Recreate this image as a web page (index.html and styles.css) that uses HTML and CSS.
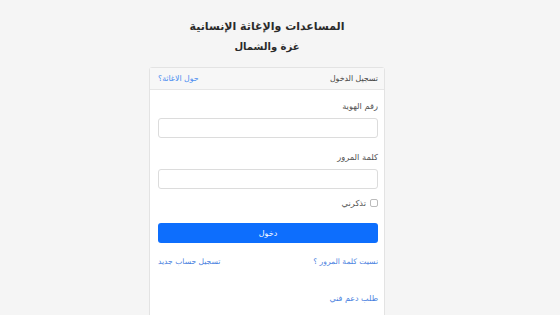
FILE: index.html
```html
<!DOCTYPE html>
<html lang="ar" dir="rtl">
<head>
<meta charset="utf-8">
<link rel="stylesheet" href="styles.css">
</head>
<body>
<div class="wrap">
  <h1 class="title">المساعدات والإغاثة الإنسانية</h1>
  <h2 class="subtitle">غزة والشمال</h2>
  <div class="card">
    <div class="card-header">
      <span class="header-title">تسجيل الدخول</span>
      <a class="header-link" href="#">حول الاغاثة؟</a>
    </div>
    <div class="card-body">
      <label class="label">رقم الهوية</label>
      <input class="input" type="text">
      <label class="label label-2">كلمة المرور</label>
      <input class="input" type="password">
      <div class="check-row">
        <span class="checkbox"></span>
        <span class="check-text">تذكرني</span>
      </div>
      <button class="btn">دخول</button>
      <div class="links">
        <a href="#" class="link">نسيت كلمة المرور ؟</a>
        <a href="#" class="link">تسجيل حساب جديد</a>
      </div>
      <a href="#" class="link support">طلب دعم فني</a>
    </div>
  </div>
</div>
</body>
</html>
```
FILE: styles.css
```css
* { box-sizing: border-box; }
html, body { margin: 0; padding: 0; }
body {
  background: #f5f5f5;
  font-family: "DejaVu Sans", "Noto Sans", sans-serif;
  color: #333;
  height: 315px;
  overflow: hidden;
}
.wrap {
  width: 236px;
  margin-left: 149px;
  margin-right: auto;
  display: flex;
  flex-direction: column;
  align-items: stretch;
}
.title {
  margin: 18px 0 0;
  font-size: 11px;
  font-weight: bold;
  text-align: center;
  line-height: 18px;
  color: #2a2a2a;
}
.subtitle {
  margin: 3px 0 0;
  font-size: 10px;
  font-weight: bold;
  text-align: center;
  line-height: 16px;
  color: #2a2a2a;
}
.card {
  margin-top: 12px;
  background: #fff;
  border: 1px solid #e3e3e3;
  border-radius: 3px;
  height: 260px;
}
.card-header {
  height: 22px;
  background: #f7f7f7;
  border-bottom: 1px solid #e6e6e6;
  display: flex;
  justify-content: space-between;
  align-items: center;
  padding: 0 6px 0 8px;
  font-size: 7.8px;
}
.header-title { color: #444; }
.header-link { color: #4a8cf0; text-decoration: none; }
.card-body {
  padding: 8px 6px 0 8px;
  display: flex;
  flex-direction: column;
}
.label {
  font-size: 8.3px;
  line-height: 14px;
  color: #555;
  margin-top: 1px;
}
.label-2 { margin-top: 12px; }
.input {
  margin-top: 5px;
  height: 20px;
  border: 1px solid #dcdcdc;
  border-radius: 3px;
  background: #fff;
  width: 100%;
}
.check-row {
  margin-top: 9px;
  display: flex;
  align-items: center;
  gap: 4px;
  height: 10px;
}
.checkbox {
  width: 8px;
  height: 8px;
  border: 1px solid #bbb;
  border-radius: 2px;
  background: #fff;
}
.check-text { font-size: 8.3px; color: #555; }
.btn {
  margin-top: 15px;
  height: 20px;
  border: none;
  border-radius: 3px;
  background: #0d6efd;
  color: #fff;
  font-family: inherit;
  font-size: 8px;
  width: 100%;
}
.links {
  margin-top: 12px;
  display: flex;
  justify-content: space-between;
  line-height: 14px;
}
.link {
  color: #4a7fe0;
  text-decoration: none;
  font-size: 7.6px;
}
.support {
  margin-top: 23px;
  line-height: 14px;
  align-self: flex-start;
  font-size: 8px;
}
```
